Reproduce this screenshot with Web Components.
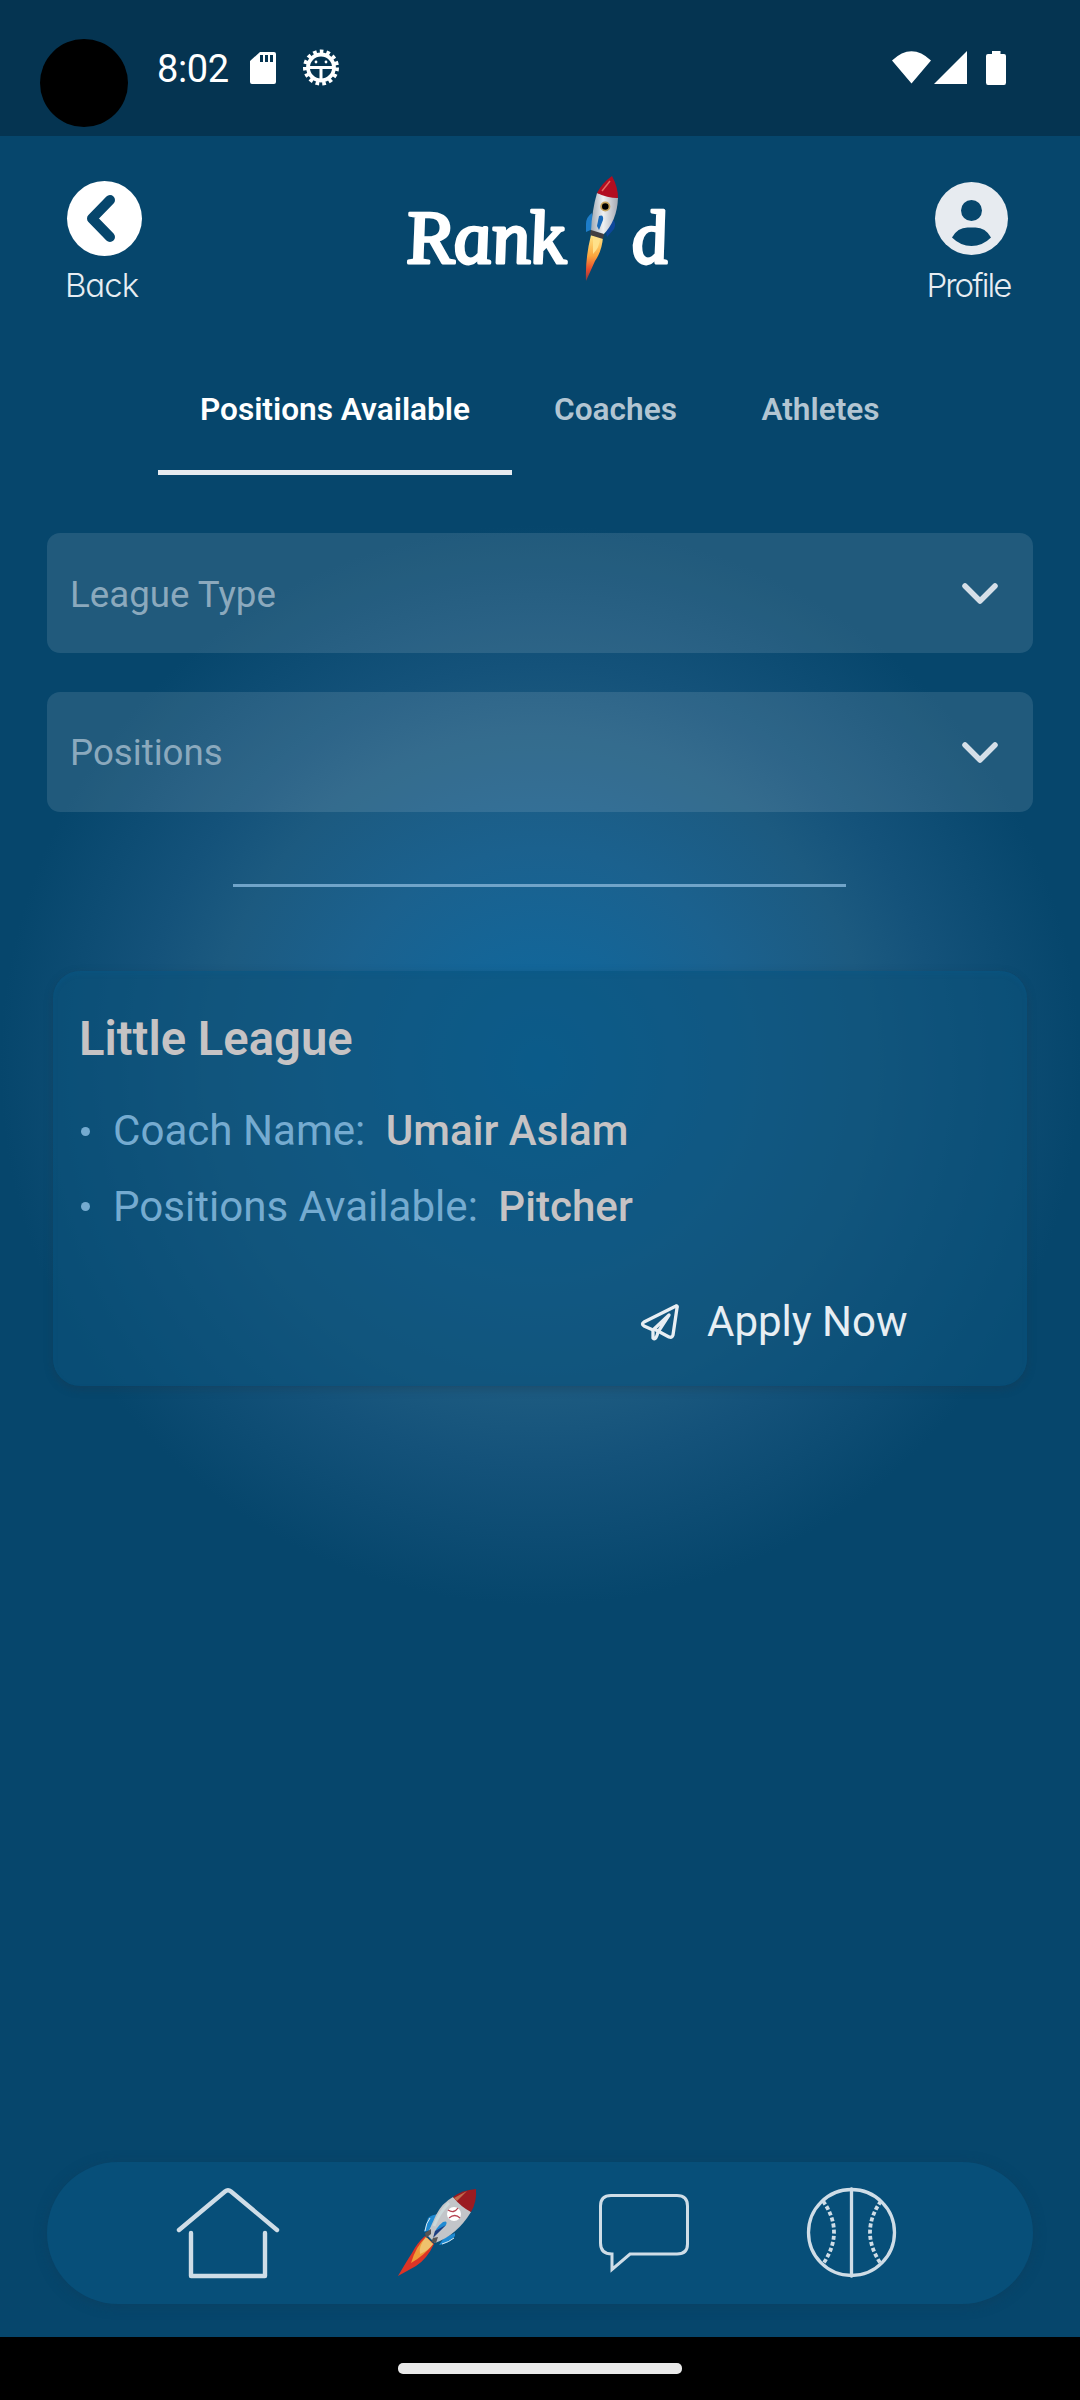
<!DOCTYPE html>
<html lang="en">
<head>
<meta charset="utf-8">
<title>Rank'd</title>
<style>
html,body{margin:0;padding:0}
body{width:1080px;height:2400px;overflow:hidden;font-family:Roboto,"Noto Sans",sans-serif;background:#06466c}
</style>
</head>
<body>
<rank-app></rank-app>
<script>
const define = (name, html) => {
  const t = document.createElement('template');
  t.innerHTML = html;
  customElements.define(name, class extends HTMLElement {
    constructor(){ super(); this.attachShadow({mode:'open'}).append(t.content.cloneNode(true)); }
  });
};

define('status-bar', `<style>
:host{display:flex;box-sizing:border-box;height:136px;padding:0 73px 0 40px;background:#053451;color:#fff}
.cam{width:88px;height:88px;border-radius:50%;background:#000;margin-top:39px}
.time{font-size:38px;line-height:44px;margin:47px 0 0 29px;width:93px;letter-spacing:-.4px;white-space:nowrap}
svg{display:block}.l{margin-top:48px}.r{margin:48px 0 0 auto}
</style>
<div class="cam"></div><div class="time">8:02</div>
<svg class="l" width="92" height="40" viewBox="250 48 92 40"><path fill="#fff" fill-rule="evenodd" d="M260 52H274Q276 52 276 54V82Q276 84 274 84H252Q250 84 250 82V61ZM260 55V62H263V55ZM265 55V62H268V55ZM270 55V62H273V55Z"/>
<g stroke="#fff" fill="none"><circle cx="321" cy="67.500" r="13" stroke-width="3.800"/><circle cx="321" cy="67.500" r="16" stroke-width="4" stroke-dasharray="3.600 3.100"/><path d="M309 67.500H333M321 67.500V80" stroke-width="3"/></g><circle cx="316" cy="62" r="1.400" fill="#fff"/><circle cx="326" cy="62" r="1.400" fill="#fff"/></svg>
<svg class="r" width="115" height="40" viewBox="892 48 115 40"><path fill="#fff" d="M892 60.500Q911.500 42 931 60.500L911.500 83.500ZM934 84L967 51V84ZM992 51H1000.500V54H1004Q1006 54 1006 56V82.500Q1006 85 1004 85H988Q986 85 986 82.500V56Q986 54 988 54H992Z"/></svg>`);

define('rocket-logo', `<style>:host{display:block}svg{display:block;overflow:visible}text{font-family:"Liberation Serif",serif;font-style:italic;font-size:76px;fill:#fff;stroke:#fff;stroke-width:3.200;stroke-linejoin:round}</style>
<svg width="270" height="120" viewBox="400 170 270 120"><g transform="translate(0 263) skewX(8)"><text x="406" y="0" textLength="158" lengthAdjust="spacingAndGlyphs">Rank</text><text x="631" y="0" textLength="37" lengthAdjust="spacingAndGlyphs">d</text></g>
<defs><linearGradient id="b"><stop stop-color="#9ea9b4"/><stop offset=".45" stop-color="#eef0f2"/><stop offset="1" stop-color="#a5a9b3"/></linearGradient><linearGradient id="f" x2="0" y2="1"><stop stop-color="#ffe585"/><stop offset=".45" stop-color="#fba73e"/><stop offset=".75" stop-color="#e64b2c"/><stop offset="1" stop-color="#7f3a47"/></linearGradient></defs>
<path fill="#1d7dc9" d="M589 213Q583 217 583 224V232L592 228Z"/><path fill="#0d479b" d="M609 219Q614 222 611 229L604 237 603 232Z"/>
<path fill="url(#f)" d="M588 235L600 237Q599 251 592 261L583 281Q582 259 588 235Z"/><path fill="#ffe18a" d="M590 237L597 238Q597 247 590 254Z"/>
<path fill="url(#b)" d="M594 193L615 198Q614 221 600 235L588 231Q589 210 594 193Z"/><path fill="#b20d20" d="M594 193Q599 183 609 176Q615 187 615 198Q604 198 594 193Z"/><path d="M599 191L607 181" stroke="#e66a61" stroke-width="1.500"/>
<path fill="#1769b9" d="M596 216Q601 214 600 220L596 230 594 226Z"/><path fill="#423f42" d="M588 230L601 234 600 239 587 235Z"/><circle cx="602.300" cy="206.500" r="4.200" stroke="#c6a35c" stroke-width="1.800"/></svg>`);

define('icon-action', `<style>:host{display:flex;flex-direction:column;align-items:center;width:84px}::slotted(svg){display:block}
.t{font:300 33px/40px Inter,sans-serif;font-feature-settings:"cv11";letter-spacing:var(--track,-1px);margin-top:8px;margin-left:-5px;color:#e7edf2;white-space:nowrap}</style><slot name="icon"></slot><div class="t"><slot></slot></div>`);

define('app-header', `<style>:host{display:flex;justify-content:space-between;box-sizing:border-box;height:234px;padding:45px 67px 0 62px}
rocket-logo{margin:-11px 0 0 0}.p{--track:-1.9px}</style>
<icon-action><svg slot="icon" width="76" height="76"><circle cx="38.500" cy="37.500" r="37.500" fill="#fff"/><path d="M44 19L26 37.500 44 56" fill="none" stroke="#06466c" stroke-width="10" stroke-linecap="round" stroke-linejoin="round"/></svg>Back</icon-action>
<rocket-logo></rocket-logo>
<icon-action class="p"><svg slot="icon" width="76" height="76"><g transform="translate(-1.500 -.5)"><circle cx="40" cy="38" r="36.500" fill="#e7ebf0"/><circle cx="40" cy="30" r="10.500" fill="#06466c"/><path fill="#06466c" d="M20.500 57Q26 47 36 47H44Q54 47 59.500 57Q51 65.500 40 65.500T20.500 57Z"/></g></svg>Profile</icon-action>`);

define('tab-item', `<style>:host{display:flex;justify-content:center;box-sizing:border-box;height:105px;padding-top:20.500px;font-weight:600;font-size:31.600px;line-height:38px;color:#b2c5d2;white-space:nowrap}:host([active]){color:#fff;border-bottom:5px solid #e6ebf0}</style><slot></slot>`);
define('tab-strip', `<style>:host{display:flex;padding-left:158px;height:105px}.a{width:354px}.b{width:207px}.c{width:203px}</style>
<tab-item class="a" active>Positions Available</tab-item><tab-item class="b">Coaches</tab-item><tab-item class="c">Athletes</tab-item>`);

define('select-field', `<style>:host{display:flex;align-items:center;justify-content:space-between;box-sizing:border-box;height:120px;border-radius:13px;background:rgba(255,255,255,.11);padding:0 33px 0 23px;font-size:36.700px;color:#8ba9bd}svg{display:block}span{padding-top:2px}</style><span><slot></slot></span>
<svg width="40" height="26" viewBox="0 0 40 26"><path d="M5 6L20 21 35 6" fill="none" stroke="#d5dfe8" stroke-width="5.500" stroke-linecap="round" stroke-linejoin="round"/></svg>`);

define('detail-row', `<style>:host{display:flex;align-items:center;font-size:42.100px;line-height:50px;color:#75abd0;white-space:nowrap}
i{width:9px;height:9px;border-radius:50%;background:#75abd0;margin:0 23px 0 2px}b{font-weight:500;color:#c6c3c4;margin-left:20.500px}</style><i></i><span><slot></slot></span><b><slot name="value"></slot></b>`);

define('league-card', `<style>:host{display:block;box-sizing:border-box;height:415px;border-radius:27px;padding:40px 26px 38px;background:rgba(12,82,122,.62);box-shadow:0 3px 8px rgba(30,55,75,.4),inset 0 3px 4px rgba(8,90,140,.3)}
h2{font-size:47.200px;line-height:56px;font-weight:560;color:#c6c3c4;margin:0 0 39px}
detail-row+detail-row{margin-top:25.700px}.apply{display:flex;align-items:center;margin:65px 0 0 560px;font-size:42px;line-height:50px;color:#e7eef3;white-space:nowrap}svg{margin-right:25px}</style>
<h2>Little League</h2>
<detail-row>Coach Name:<span slot="value">Umair Aslam</span></detail-row>
<detail-row>Positions Available:<span slot="value">Pitcher</span></detail-row>
<div class="apply"><svg width="43" height="42" viewBox="639 1300 43 42"><g fill="none" stroke="#e7eef3" stroke-width="3.300" stroke-linejoin="round" stroke-linecap="round"><path d="M676 1305Q678 1305 677 1307L673 1334Q672 1337 669 1336L656 1329M676 1305L644 1321Q641 1323 644 1325L653 1329"/><path d="M653 1329L669 1314 658 1331Q656 1340 653 1337V1329"/></g></svg>Apply Now</div>`);

define('bottom-nav', `<style>:host{display:flex;align-items:center;box-sizing:border-box;height:142px;border-radius:71px;background:#074f79;box-shadow:0 2px 12px rgba(15,60,90,.5)}svg{display:block;overflow:visible}</style>
<svg width="986" height="142" viewBox="47 2162 986 142"><g fill="none" stroke="#cfdde7" stroke-linecap="round" stroke-linejoin="round"><path stroke-width="4.400" d="M179 2230L225 2191.500Q228 2189 231 2191.500L277 2230M191 2233V2276H265V2233"/>
<path stroke-width="3" stroke-linejoin="miter" d="M630 2254H677Q687.500 2254 687.500 2244V2206Q687.500 2195.500 677 2195.500H611Q600.500 2195.500 600.500 2206V2243Q600.500 2254 612 2254V2269.500Z"/>
<g stroke-width="3.300"><circle cx="851.500" cy="2232.500" r="43"/><path d="M851.500 2189V2276"/><g stroke-width="3.800" stroke-dasharray="4 2.200" stroke-linecap="butt"><path d="M823 2201Q845 2232 823 2264M881 2201Q859 2232 881 2264"/></g></g></g>
<path fill="#dd3426" d="M425 2236L434 2244Q427 2259 416 2266L398 2276Q408 2259 412 2253Q417 2243 425 2236Z"/><path fill="#f09a37" d="M426 2237L433 2244Q425 2255 411 2263Q416 2246 426 2237Z"/><path fill="#efc16d" d="M426 2237L433 2244Q428 2251 420 2254Q418 2247 426 2237Z"/>
<path fill="#1c89d2" d="M438 2214Q431 2215 428 2218L424 2232 431 2230ZM455 2233V2236Q449 2244 439 2245L444 2238Z"/><path d="M425 2231Q426 2223 430 2218M442 2244Q449 2242 454 2238" fill="none" stroke="#dceaf0"/>
<path fill="#c2c5c9" d="M453 2197Q442 2203 436 2215L427 2235 435 2243Q457 2235 471 2212Z"/><path d="M449 2203Q439 2213 434 2226" fill="none" stroke="#cbd8da" stroke-width="3"/>
<path fill="#9b1b21" d="M453 2197Q462 2190 476 2189Q477 2202 471 2212Q461 2207 453 2197Z"/><path fill="#c26b4c" d="M454 2198L467 2191 457 2201Z"/><circle cx="454" cy="2214" r="7" fill="#fff"/><path d="M448 2210Q454 2214 458 2208M449 2218Q455 2213 460 2218" fill="none" stroke="#b64250" stroke-width="1.300"/>
<path fill="#1f8bd4" d="M443 2222Q448 2220 446 2225L434 2236Q435 2228 443 2222Z"/><path fill="#1c3d80" d="M446 2225L433 2238 435 2231Z"/><path fill="#565454" d="M425 2233L431 2229 431 2234 426 2238ZM433 2238L438 2237 436 2243 431 2242Z"/></svg>`);

define('rank-app', `<style>:host{display:flex;flex-direction:column;width:1080px;height:2400px;background:radial-gradient(circle 540px at 540px 1065px,#0c6aa2 0,#1b618e 40%,#1c5a80 61%,#14527a 74%,#06466c 100%),#06466c}
main{display:flex;flex-direction:column;flex:1;padding:0 47px}.f{margin-top:58px}.f+.f{margin-top:38.500px}hr{width:613px;height:3px;border:0;background:#70a4c9;margin:72px 0 0 186px}league-card{margin:84.500px 6px 0}bottom-nav{margin-top:auto;margin-bottom:33px}
.home{height:63px;background:#000;display:flex;justify-content:center}.home i{width:284px;height:10.500px;border-radius:5px;background:#eaeaea;margin-top:26px}</style>
<status-bar></status-bar><app-header></app-header><tab-strip></tab-strip>
<main><select-field class="f">League Type</select-field><select-field class="f">Positions</select-field><hr><league-card></league-card><bottom-nav></bottom-nav></main><div class="home"><i></i></div>`);
</script>
</body>
</html>
